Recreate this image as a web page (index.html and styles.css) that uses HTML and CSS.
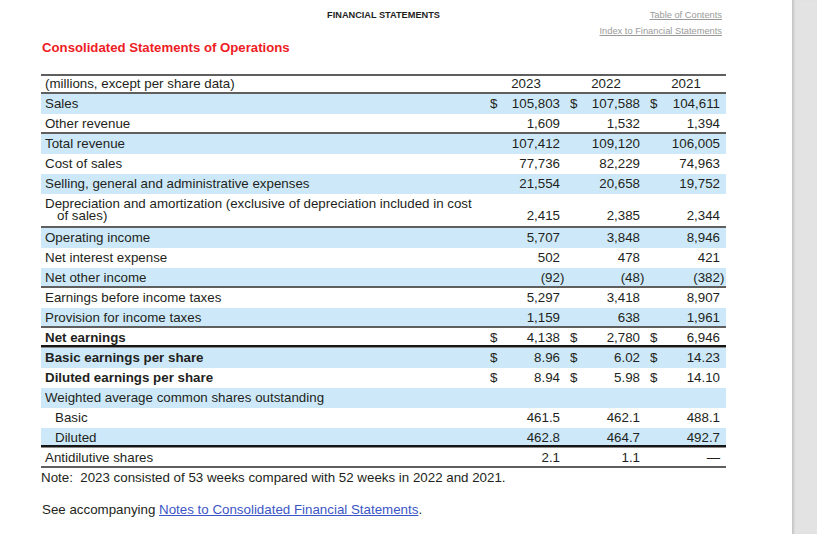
FILE: index.html
```html
<!DOCTYPE html>
<html lang="en">
<head>
<meta charset="utf-8">
<title>Consolidated Statements of Operations</title>
<link rel="stylesheet" href="styles.css">
</head>
<body>
<div class="page">
  <div class="topbar">
    <div></div>
    <div class="section">FINANCIAL STATEMENTS</div>
    <div class="links">
      <a href="#">Table of Contents</a>
      <a href="#">Index to Financial Statements</a>
    </div>
  </div>
  <h1 class="title">Consolidated Statements of Operations</h1>

  <div class="stmt">
    <div class="row head">
      <div class="lab">(millions, except per share data)</div>
      <div class="yr">2023</div><div class="yr">2022</div><div class="yr">2021</div>
    </div>
    <div class="row alt">
      <div class="lab">Sales</div>
      <div class="cur">$</div><div class="num">105,803</div>
      <div class="cur">$</div><div class="num">107,588</div>
      <div class="cur">$</div><div class="num">104,611</div>
    </div>
    <div class="row rule">
      <div class="lab">Other revenue</div>
      <div class="cur"></div><div class="num">1,609</div>
      <div class="cur"></div><div class="num">1,532</div>
      <div class="cur"></div><div class="num">1,394</div>
    </div>
    <div class="row alt">
      <div class="lab">Total revenue</div>
      <div class="cur"></div><div class="num">107,412</div>
      <div class="cur"></div><div class="num">109,120</div>
      <div class="cur"></div><div class="num">106,005</div>
    </div>
    <div class="row">
      <div class="lab">Cost of sales</div>
      <div class="cur"></div><div class="num">77,736</div>
      <div class="cur"></div><div class="num">82,229</div>
      <div class="cur"></div><div class="num">74,963</div>
    </div>
    <div class="row alt">
      <div class="lab">Selling, general and administrative expenses</div>
      <div class="cur"></div><div class="num">21,554</div>
      <div class="cur"></div><div class="num">20,658</div>
      <div class="cur"></div><div class="num">19,752</div>
    </div>
    <div class="row tall rule">
      <div class="lab wrap"><span class="ln">Depreciation and amortization (exclusive of depreciation included in cost</span><span class="ln ind">of sales)</span></div>
      <div class="cur"></div><div class="num">2,415</div>
      <div class="cur"></div><div class="num">2,385</div>
      <div class="cur"></div><div class="num">2,344</div>
    </div>
    <div class="row alt">
      <div class="lab">Operating income</div>
      <div class="cur"></div><div class="num">5,707</div>
      <div class="cur"></div><div class="num">3,848</div>
      <div class="cur"></div><div class="num">8,946</div>
    </div>
    <div class="row">
      <div class="lab">Net interest expense</div>
      <div class="cur"></div><div class="num">502</div>
      <div class="cur"></div><div class="num">478</div>
      <div class="cur"></div><div class="num">421</div>
    </div>
    <div class="row alt rule">
      <div class="lab">Net other income</div>
      <div class="cur"></div><div class="num">(92<span class="paren">)</span></div>
      <div class="cur"></div><div class="num">(48<span class="paren">)</span></div>
      <div class="cur"></div><div class="num">(382<span class="paren">)</span></div>
    </div>
    <div class="row">
      <div class="lab">Earnings before income taxes</div>
      <div class="cur"></div><div class="num">5,297</div>
      <div class="cur"></div><div class="num">3,418</div>
      <div class="cur"></div><div class="num">8,907</div>
    </div>
    <div class="row alt rule">
      <div class="lab">Provision for income taxes</div>
      <div class="cur"></div><div class="num">1,159</div>
      <div class="cur"></div><div class="num">638</div>
      <div class="cur"></div><div class="num">1,961</div>
    </div>
    <div class="row double">
      <div class="lab bold">Net earnings</div>
      <div class="cur">$</div><div class="num">4,138</div>
      <div class="cur">$</div><div class="num">2,780</div>
      <div class="cur">$</div><div class="num">6,946</div>
    </div>
    <div class="row alt">
      <div class="lab bold">Basic earnings per share</div>
      <div class="cur">$</div><div class="num">8.96</div>
      <div class="cur">$</div><div class="num">6.02</div>
      <div class="cur">$</div><div class="num">14.23</div>
    </div>
    <div class="row">
      <div class="lab bold">Diluted earnings per share</div>
      <div class="cur">$</div><div class="num">8.94</div>
      <div class="cur">$</div><div class="num">5.98</div>
      <div class="cur">$</div><div class="num">14.10</div>
    </div>
    <div class="row alt">
      <div class="lab">Weighted average common shares outstanding</div>
    </div>
    <div class="row">
      <div class="lab sub">Basic</div>
      <div class="cur"></div><div class="num">461.5</div>
      <div class="cur"></div><div class="num">462.1</div>
      <div class="cur"></div><div class="num">488.1</div>
    </div>
    <div class="row alt double">
      <div class="lab sub">Diluted</div>
      <div class="cur"></div><div class="num">462.8</div>
      <div class="cur"></div><div class="num">464.7</div>
      <div class="cur"></div><div class="num">492.7</div>
    </div>
    <div class="row rule">
      <div class="lab">Antidilutive shares</div>
      <div class="cur"></div><div class="num">2.1</div>
      <div class="cur"></div><div class="num">1.1</div>
      <div class="cur"></div><div class="num">&mdash;</div>
    </div>
  </div>

  <p class="note">Note:&nbsp; 2023 consisted of 53 weeks compared with 52 weeks in 2022 and 2021.</p>
  <p class="see">See accompanying <a href="#">Notes to Consolidated Financial Statements</a>.</p>
</div>
<div class="side"></div>
</body>
</html>
```

FILE: styles.css
```css
html, body {
  margin: 0;
  padding: 0;
  height: 100%;
}

body {
  display: flex;
  background: #ffffff;
  font-family: "Liberation Sans", Arial, sans-serif;
  font-size: 13.33px;
  color: #231f20;
}

.page {
  width: 792px;
  flex: none;
  box-sizing: border-box;
  padding: 7px 66px 0 41px;
}

.side {
  flex: 1;
  background: #e3e3e3;
  box-shadow: inset 3px 0 2px -1px #c6c6c6;
}

.topbar {
  display: grid;
  grid-template-columns: 1fr auto 1fr;
  align-items: start;
}

.section {
  font-size: 9.2px;
  font-weight: bold;
  line-height: 16px;
  color: #1e1e1e;
}

.links {
  display: flex;
  flex-direction: column;
  align-items: flex-end;
  padding-right: 4px;
}

.links a {
  font-size: 9.3px;
  line-height: 16px;
  color: #9a9a9a;
  text-decoration: underline;
}

.title {
  margin: 0 0 18px 1px;
  font-size: 13.2px;
  line-height: 17px;
  font-weight: bold;
  color: #ee1c25;
}

.stmt {
  width: 685px;
}

.row {
  display: grid;
  grid-template-columns: 445px repeat(3, 14px 66px);
  height: 20px;
  line-height: 20px;
  box-sizing: border-box;
  white-space: nowrap;
}

.row.alt {
  background: #cde9f9;
}

.row.head {
  grid-template-columns: 445px repeat(3, 80px);
  box-shadow: inset 0 2px 0 #5f5f5f, inset 0 -2px 0 #5f5f5f;
}

.row.rule {
  box-shadow: inset 0 -2px 0 #5f5f5f;
}

.row.double {
  box-shadow: inset 0 -1px 0 #8a8a8a, inset 0 -3px 0 #161616;
}

.row.tall {
  height: 34px;
}

.lab {
  padding-left: 4px;
}

.lab.bold {
  font-weight: bold;
}

.lab.sub {
  padding-left: 14px;
}

.lab.wrap {
  display: flex;
  flex-direction: column;
  padding-top: 4px;
}

.lab.wrap .ln {
  display: block;
  height: 12px;
  line-height: 12px;
  overflow: visible;
}

.lab.wrap .ind {
  padding-left: 12px;
}

.yr {
  text-align: center;
}

.cur {
  padding-left: 4px;
}

.num {
  text-align: right;
  padding-right: 6px;
}

.tall .num,
.tall .cur {
  align-self: end;
  line-height: 12px;
  padding-bottom: 6px;
}

.paren {
  margin-right: -4.4px;
}

.note {
  margin: 0;
  line-height: 20px;
}

.see {
  margin: 12px 0 0 1px;
  line-height: 20px;
}

.see a {
  color: #3b55c6;
  text-decoration: underline;
}
```
